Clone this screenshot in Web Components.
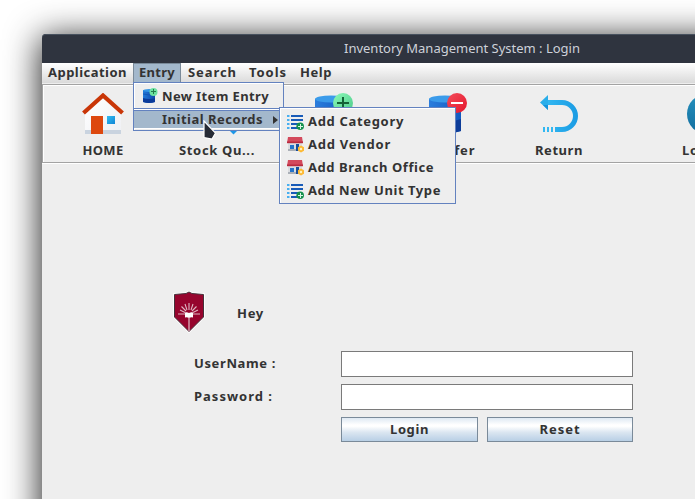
<!DOCTYPE html>
<html lang="en"><head><meta charset="utf-8"><title>Inventory Management System</title>
<style>
html,body{margin:0;background:#fff;overflow:hidden;height:499px}
body{font:bold 13px/16px "Noto Sans",sans-serif;color:#333}
</style></head><body>
<ims-window></ims-window>
<script>
// Text run whose letter spacing is adjusted to fill a given width.
class FitText extends HTMLElement{
  connectedCallback(){
    const r=this.attachShadow({mode:'open'});
    r.innerHTML=`<style>:host{display:inline-block;white-space:pre}span{display:inline-block}</style><span></span>`;
    const s=r.querySelector('span'),t=this.getAttribute('text'),w=+this.getAttribute('w');
    s.textContent=t;
    const n=s.getBoundingClientRect().width;
    if(w&&n){s.style.letterSpacing=((w-n)/t.length)+'px';this.style.width=w+'px';}
  }
}
customElements.define('fit-text',FitText);

const ICONS={
home:`<svg width="42" height="42" viewBox="0 0 42 42"><defs><linearGradient id="a" x1="0" y1="0" x2="1" y2="1"><stop offset="0" stop-color="#fff"/><stop offset="1" stop-color="#eff0f4"/></linearGradient><linearGradient id="b" x2="1" y2="1"><stop stop-color="#32bcf0"/><stop offset="1" stop-color="#1286d6"/></linearGradient></defs><path d="M3 18 21 3l18 15v23H3z" fill="url(#a)"/><path d="M3 37h36v4H3z" fill="#c9d3df"/><path d="M9 23h12v18H9z" fill="#dd480f"/><rect x="25" y="23" width="8" height="8" fill="url(#b)"/><path d="M1.500 20 21 2.500 40.500 20" fill="none" stroke="#c93608" stroke-width="4.200"/></svg>`,
stock:`<svg width="42" height="42" viewBox="0 0 42 42"><path d="M7 8h28v18H7z" fill="#1979d2"/><path d="M32 36h11l-5.500 5.500z" fill="#1d97e8"/></svg>`,
add:`<svg width="42" height="42" viewBox="0 0 42 42"><defs><linearGradient id="a"><stop stop-color="#2b7ddd"/><stop offset="1" stop-color="#125ac0"/></linearGradient><linearGradient id="g" x2="1" y2="1"><stop stop-color="#8cfab8"/><stop offset="1" stop-color="#4bc989"/></linearGradient></defs><path d="M2 6v32q16 5 32 0V6z" fill="url(#a)"/><ellipse cx="18" cy="6" rx="16" ry="3.500" fill="#3b9bea"/><circle cx="30" cy="10" r="10" fill="url(#g)"/><path d="M24 10h12M30 4v12" stroke="#136137" stroke-width="2"/></svg>`,
transfer:`<svg width="42" height="42" viewBox="0 0 42 42"><defs><linearGradient id="a"><stop stop-color="#2b7ddd"/><stop offset="1" stop-color="#125ac0"/></linearGradient><linearGradient id="g" x2="1" y2="1"><stop stop-color="#f34d5b"/><stop offset="1" stop-color="#e5152c"/></linearGradient></defs><path d="M2 6v32q16 5 32 0V6z" fill="url(#a)"/><path d="M2 27q16 5 32-1v12q-16 5-32 0z" fill="#0d3c98"/><ellipse cx="18" cy="6" rx="16" ry="3.500" fill="#3b9bea"/><circle cx="30" cy="10" r="10" fill="url(#g)"/><path d="M24 10h12" stroke="#fff" stroke-width="2"/></svg>`,
ret:`<svg width="42" height="42" viewBox="0 0 42 42"><defs><linearGradient id="a" x1="0" x2="1"><stop stop-color="#32b8f2"/><stop offset="1" stop-color="#1c9de4"/></linearGradient></defs><path d="M8 9.500h16a13.500 13.500 0 0 1 0 27H17" fill="none" stroke="url(#a)" stroke-width="5"/><path d="M2 9.500 10 2v15z" fill="#29aeea"/><path d="M5 12h5v5z" fill="#1493dc"/><path d="M5 34h2v5H5zM9 34h2v5H9zM13 34h2v5h-2z" fill="#32b8f2"/></svg>`,
info:`<svg width="42" height="42" viewBox="0 0 42 42"><defs><linearGradient id="a" x2="0" y2="1"><stop stop-color="#2590bd"/><stop offset="1" stop-color="#126d9e"/></linearGradient></defs><circle cx="21" cy="21" r="20" fill="url(#a)"/></svg>`,
item:`<svg width="16" height="16" viewBox="0 0 16 16"><defs><linearGradient id="a"><stop stop-color="#237bd9"/><stop offset="1" stop-color="#1046aa"/></linearGradient></defs><path d="M1 2v12q6 2 12 0V2z" fill="url(#a)"/><path d="M1 10q6 2 12 0v4q-6 2-12 0z" fill="#0b3b9a"/><path d="M1 6q6 2 12-.5" fill="none" stroke="#1459b8"/><ellipse cx="7" cy="2.500" rx="6" ry="1.500" fill="#3597e6"/><circle cx="11.500" cy="4" r="4" fill="#6de2a0"/><path d="M9 3.500h5M11.500 1v5" stroke="#237b4c"/></svg>`,
list:`<svg width="17" height="16" viewBox="0 0 17 16"><path d="M0 2h2.500M0 6h2.500M0 10h2.500M0 14h2.500" stroke="#48aff0" stroke-width="2"/><path d="M4 2h12M4 6h12M4 10h8M4 14h7" stroke="#185bb8" stroke-width="2"/><circle cx="13.200" cy="12.200" r="3.800" fill="#15904d"/><path d="M11 12.500h5M13.500 10v5" stroke="#d8f4e3"/></svg>`,
shop:`<svg width="17" height="16" viewBox="0 0 17 16"><path d="M1 6h14v8H1z" fill="#dadce0"/><path d="M1 12h12v2H1z" fill="#abb0b7"/><path d="M1 0h14l1 6H0z" fill="#d3495c"/><path d="M0 4.500h16v1.700H0z" fill="#b92a3e"/><path d="M3 8h4v4H3z" fill="#2373ca"/><path d="M9 7h3v7H9z" fill="#164e9b"/><path d="m14 8.500 3 1.800v3.400l-3 1.800-3-1.800v-3.400z" fill="#fdb934"/><circle cx="14" cy="12" r="1.200" fill="#fff1bd"/></svg>`,
crest:`<svg width="32" height="42" viewBox="0 0 32 42"><path d="M1.500 3.500 13 2.500 16 1l3 1.500 11.500 1V26L16 40.500 1.500 26z" fill="#96042d" stroke="#fff" stroke-width="2.600"/><path d="M1.500 3.500 13 2.500 16 1l3 1.500 11.500 1V26L16 40.500 1.500 26z" fill="#96042d" stroke="#45313a" stroke-width="1"/><path d="M5 23h7M20 23h7M7 19l5 2.500M25 19l-5 2.500M8.500 15.500l4.500 4.500M23.500 15.500l-4.500 4.500M12 13l2 6M20 13l-2 6M16 12v7" stroke="#deb6c1" stroke-width="1.100"/><path d="M12 21.500q2-.5 4 .5 2-1 4-.5v5q-2-.5-4 .5-2-1-4-.5z" fill="#fff"/><path d="M16 26v14" stroke="#e2c2ca" stroke-width="1.200"/></svg>`
};
class UiIcon extends HTMLElement{
  connectedCallback(){this.attachShadow({mode:'open'}).innerHTML=`<style>:host{display:block;flex:none}svg{display:block}</style>${ICONS[this.getAttribute('name')]||''}`}
}
customElements.define('ui-icon',UiIcon);

class ToolButton extends HTMLElement{
  connectedCallback(){this.attachShadow({mode:'open'}).innerHTML=`<style>:host{display:flex;flex-direction:column;align-items:center;width:114px;flex:none;gap:7px}</style><slot name="icon"></slot><slot></slot>`}
}
customElements.define('tool-button',ToolButton);

class MenuTitle extends HTMLElement{
  connectedCallback(){this.attachShadow({mode:'open'}).innerHTML=`<style>:host{display:block;box-sizing:border-box;height:20px;padding:1px 6px 0}
  :host([open]){background:#a3b8cc;box-shadow:inset 1px 1px #7a8a99,inset -1px 0 #7a8a99}</style><slot></slot>`}
}
customElements.define('menu-title',MenuTitle);

class MenuPopup extends HTMLElement{
  connectedCallback(){this.attachShadow({mode:'open'}).innerHTML=`<style>:host{display:block;position:absolute;box-sizing:border-box;background:#eee;border:1px solid #6382bf;box-shadow:inset 1px 1px #fff;padding:2px 1px}</style><slot></slot>`}
}
customElements.define('menu-popup',MenuPopup);

class MenuItem extends HTMLElement{
  connectedCallback(){this.attachShadow({mode:'open'}).innerHTML=`<style>:host{display:flex;align-items:center;gap:5px;height:23px;box-sizing:border-box;padding:1px 0 0 6px}
  .slot{width:16px;flex:none}::slotted(fit-text){margin-bottom:2px}</style><div class="slot"><slot name="icon"></slot></div><slot></slot>`}
}
customElements.define('menu-item',MenuItem);

class TextField extends HTMLElement{
  connectedCallback(){this.attachShadow({mode:'open'}).innerHTML=`<style>:host{display:block;box-sizing:border-box;height:26px;background:#fff;border:1px solid #7a7a7a}</style>`}
}
customElements.define('text-field',TextField);

class PushButton extends HTMLElement{
  connectedCallback(){this.attachShadow({mode:'open'}).innerHTML=`<style>:host{display:flex;align-items:center;justify-content:center;box-sizing:border-box;height:25px;padding-bottom:1px;border:1px solid #7a8a99;background:linear-gradient(#dfe9f3,#fff 30%,#fff 36%,#dbe6f1 62%,#b8cfe5)}</style><slot></slot>`}
}
customElements.define('push-button',PushButton);

class ImsWindow extends HTMLElement{
  connectedCallback(){this.attachShadow({mode:'open'}).innerHTML=`<style>
:host{display:block;position:relative;margin:34px 0 0 42px;width:840px;height:640px;background:#eee;border-radius:5px 5px 0 0;box-shadow:0 5px 34px 2px rgba(0,0,0,.85)}
.title{height:29px;background:#2f343f;border-radius:4px 4px 0 0;box-shadow:inset 0 1px #47515e;text-align:center;color:#cdd1d9;font-weight:400;line-height:29px}
.bar{display:flex;background:linear-gradient(#fff,#dadada);border-bottom:1px solid #eee;box-sizing:border-box;height:21px}
.tools{display:flex;box-sizing:border-box;height:79px;border:1px solid #a3a3a3;box-shadow:inset 1px 1px #fff,0 1px #fff;padding:8px 0 0 3px;overflow:hidden}
.form{display:grid;grid-template-columns:147px 292px;padding:128px 0 0 152px;row-gap:7px;align-items:center}
.form>fit-text{margin-bottom:2px}
.who{grid-column:1/3;display:flex;align-items:center;gap:32px;height:42px;margin:0 0 11px -21px}
.who fit-text{margin-top:1px}
.btns{grid-column:2;display:grid;grid-template-columns:137px 146px;gap:9px}
.entry{left:91px;top:48px;width:151px;height:49px}
.new ui-icon{margin:-2px 0 0 1px}
.sel{background:#a3b8cc;height:19px;margin:2px -1px 0;border-top:1px solid #6382bf;border-bottom:1px solid #fff;box-shadow:0 -1px #fff,0 -2px #6382bf;padding:0 0 0 7px}
.arrow{width:0;height:0;border-left:5px solid #333;border-top:4px solid transparent;border-bottom:4px solid transparent;margin-left:5px}
.sub{left:237px;top:73px;width:177px;height:97px}
.cursor{position:absolute;left:161px;top:86px;display:block}
</style>
<div class="title"><fit-text text="Inventory Management System : Login" w="236"></fit-text></div>
<div class="bar"><menu-title><fit-text text="Application" w="79"></fit-text></menu-title><menu-title open><fit-text text="Entry" w="36"></fit-text></menu-title><menu-title style="padding-left:7px"><fit-text text="Search" w="49"></fit-text></menu-title><menu-title><fit-text text="Tools" w="38"></fit-text></menu-title><menu-title style="padding-left:7px"><fit-text text="Help" w="32"></fit-text></menu-title></div>
<div class="tools">
<tool-button><ui-icon slot="icon" name="home"></ui-icon><fit-text text="HOME" w="41"></fit-text></tool-button>
<tool-button><ui-icon slot="icon" name="stock"></ui-icon><fit-text text="Stock Qu..." w="76"></fit-text></tool-button>
<tool-button><ui-icon slot="icon" name="add" style="margin-left:6px"></ui-icon></tool-button>
<tool-button><ui-icon slot="icon" name="transfer" style="margin-left:6px"></ui-icon><fit-text text="Transfer" w="61"></fit-text></tool-button>
<tool-button><ui-icon slot="icon" name="ret"></ui-icon><fit-text text="Return" w="48"></fit-text></tool-button>
<tool-button style="margin-left:34px"><ui-icon slot="icon" name="info"></ui-icon><fit-text text="Logout" w="50"></fit-text></tool-button>
</div>
<div class="form">
<div class="who"><ui-icon name="crest"></ui-icon><fit-text text="Hey" w="27"></fit-text></div>
<fit-text text="UserName :" w="82"></fit-text><text-field></text-field>
<fit-text text="Password :" w="79"></fit-text><text-field></text-field>
<div class="btns"><push-button><fit-text text="Login" w="39"></fit-text></push-button><push-button><fit-text text="Reset" w="41"></fit-text></push-button></div>
</div>
<menu-popup class="entry"><menu-item class="new"><ui-icon slot="icon" name="item"></ui-icon><fit-text text="New Item Entry" w="107"></fit-text></menu-item>
<menu-item class="sel"><fit-text text="Initial Records" w="101"></fit-text><div class="arrow"></div></menu-item></menu-popup>
<menu-popup class="sub">
<menu-item><ui-icon slot="icon" name="list"></ui-icon><fit-text text="Add Category" w="96"></fit-text></menu-item>
<menu-item><ui-icon slot="icon" name="shop"></ui-icon><fit-text text="Add Vendor" w="83"></fit-text></menu-item>
<menu-item><ui-icon slot="icon" name="shop"></ui-icon><fit-text text="Add Branch Office" w="126"></fit-text></menu-item>
<menu-item><ui-icon slot="icon" name="list"></ui-icon><fit-text text="Add New Unit Type" w="133"></fit-text></menu-item>
</menu-popup>
<svg class="cursor" width="14" height="20" viewBox="0 0 14 20"><path d="M1 1v16.500l8 1.500 3.500-6z" fill="#262b35" stroke="#fff" stroke-width="1.200"/></svg>`}
}
customElements.define('ims-window',ImsWindow);
</script></body></html>
